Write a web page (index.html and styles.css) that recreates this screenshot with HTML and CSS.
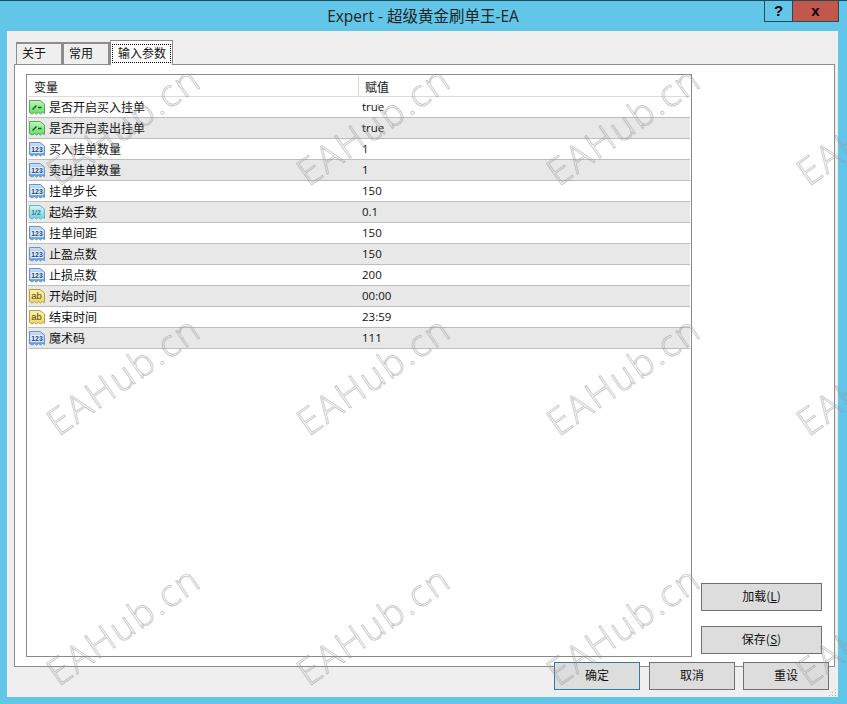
FILE: index.html
```html
<!DOCTYPE html>
<html lang="zh">
<head>
<meta charset="utf-8">
<title>Expert - 超级黄金刷单王-EA</title>
<link rel="stylesheet" href="styles.css">
</head>
<body>
<svg class="defs" width="0" height="0">
  <defs>
    <linearGradient id="gb" x1="0" y1="0" x2="0" y2="1"><stop offset="0" stop-color="#cfe3f8"/><stop offset="1" stop-color="#5f9cdc"/></linearGradient>
    <linearGradient id="gg" x1="0" y1="0" x2="0" y2="1"><stop offset="0" stop-color="#c4f5be"/><stop offset="1" stop-color="#5fdc66"/></linearGradient>
    <linearGradient id="gy" x1="0" y1="0" x2="0" y2="1"><stop offset="0" stop-color="#fbf1b8"/><stop offset="1" stop-color="#ecd668"/></linearGradient>
    <linearGradient id="gc" x1="0" y1="0" x2="0" y2="1"><stop offset="0" stop-color="#d8f4f6"/><stop offset="1" stop-color="#6fd0de"/></linearGradient>
    <symbol id="ic-bool" viewBox="0 0 16 16">
      <path d="M.5 1.500H11L15.500 5V14.500L13.500 13.500L11.500 15L9.500 13.500L7.500 15L5.500 13.500L3 15L.5 13.500Z" fill="url(#gg)" stroke="#58a858"/>
      <path d="M3.500 10.500L7.500 6.500M9 8.500H12.500" fill="none" stroke="#0c5c14" stroke-width="1.400"/>
    </symbol>
    <symbol id="ic-int" viewBox="0 0 16 16">
      <path d="M.5 1.500H11L15.500 5V14.500L13.500 13.500L11.500 15L9.500 13.500L7.500 15L5.500 13.500L3 15L.5 13.500Z" fill="url(#gb)" stroke="#6a94c4"/>
      <rect x="1.500" y="5" width="13" height="7" fill="#e6f0fb"/>
      <text x="8" y="11" class="ic-t ic-blue">123</text>
    </symbol>
    <symbol id="ic-dbl" viewBox="0 0 16 16">
      <path d="M.5 1.500H11L15.500 5V14.500L13.500 13.500L11.500 15L9.500 13.500L7.500 15L5.500 13.500L3 15L.5 13.500Z" fill="url(#gc)" stroke="#6ab4c4"/>
      <text x="7" y="10.500" class="ic-t ic-teal">1/2</text>
    </symbol>
    <symbol id="ic-str" viewBox="0 0 16 16">
      <path d="M.5 1.500H11L15.500 5V14.500L13.500 13.500L11.500 15L9.500 13.500L7.500 15L5.500 13.500L3 15L.5 13.500Z" fill="url(#gy)" stroke="#b8a040"/>
      <text x="7.500" y="11" class="ic-t ic-brown">ab</text>
    </symbol>
  </defs>
</svg>

<div class="window">
  <header class="titlebar">
    <div class="title">Expert - 超级黄金刷单王-EA</div>
    <div class="caption">
      <span class="cap cap-help">?</span>
      <span class="cap cap-close">x</span>
    </div>
  </header>

  <div class="dialog">
    <nav class="tabs">
      <span class="tab">关于</span>
      <span class="tab">常用</span>
      <span class="tab tab-active"><span class="focus">输入参数</span></span>
    </nav>

    <section class="pane">
      <div class="table">
        <div class="row head"><div class="c1">变量</div><div class="c2">赋值</div></div>
        <div class="row"><div class="c1"><svg class="ic"><use href="#ic-bool"/></svg>是否开启买入挂单</div><div class="c2">true</div></div>
        <div class="row alt"><div class="c1"><svg class="ic"><use href="#ic-bool"/></svg>是否开启卖出挂单</div><div class="c2">true</div></div>
        <div class="row"><div class="c1"><svg class="ic"><use href="#ic-int"/></svg>买入挂单数量</div><div class="c2">1</div></div>
        <div class="row alt"><div class="c1"><svg class="ic"><use href="#ic-int"/></svg>卖出挂单数量</div><div class="c2">1</div></div>
        <div class="row"><div class="c1"><svg class="ic"><use href="#ic-int"/></svg>挂单步长</div><div class="c2">150</div></div>
        <div class="row alt"><div class="c1"><svg class="ic"><use href="#ic-dbl"/></svg>起始手数</div><div class="c2">0.1</div></div>
        <div class="row"><div class="c1"><svg class="ic"><use href="#ic-int"/></svg>挂单间距</div><div class="c2">150</div></div>
        <div class="row alt"><div class="c1"><svg class="ic"><use href="#ic-int"/></svg>止盈点数</div><div class="c2">150</div></div>
        <div class="row"><div class="c1"><svg class="ic"><use href="#ic-int"/></svg>止损点数</div><div class="c2">200</div></div>
        <div class="row alt"><div class="c1"><svg class="ic"><use href="#ic-str"/></svg>开始时间</div><div class="c2">00:00</div></div>
        <div class="row"><div class="c1"><svg class="ic"><use href="#ic-str"/></svg>结束时间</div><div class="c2">23:59</div></div>
        <div class="row alt"><div class="c1"><svg class="ic"><use href="#ic-int"/></svg>魔术码</div><div class="c2">111</div></div>
      </div>
      <div class="side">
        <button class="btn btn-side">加载(<u>L</u>)</button>
        <button class="btn btn-side">保存(<u>S</u>)</button>
      </div>
    </section>

    <footer class="actions">
      <button class="btn btn-act btn-default">确定</button>
      <button class="btn btn-act">取消</button>
      <button class="btn btn-act">重设</button>
      <svg class="grip" width="9" height="9" viewBox="0 0 9 9"><path d="M7 1h1v1H7zM4 4h1v1H4zM7 4h1v1H7zM1 7h1v1H1zM4 7h1v1H4zM7 7h1v1H7z" fill="#b0b0b0"/></svg>
    </footer>
  </div>
</div>

<div class="watermarks">
  <span class="wm">EAHub.cn</span><span class="wm">EAHub.cn</span><span class="wm">EAHub.cn</span><span class="wm">EAHub.cn</span>
  <span class="wm">EAHub.cn</span><span class="wm">EAHub.cn</span><span class="wm">EAHub.cn</span><span class="wm">EAHub.cn</span>
  <span class="wm">EAHub.cn</span><span class="wm">EAHub.cn</span><span class="wm">EAHub.cn</span><span class="wm">EAHub.cn</span>
</div>
</body>
</html>
```
FILE: styles.css
```css
* { box-sizing: border-box; }
html, body { margin: 0; padding: 0; }
body {
  width: 847px;
  height: 704px;
  overflow: hidden;
  position: relative;
  background: #62c6e9;
  font-family: "Noto Sans CJK SC", sans-serif;
  font-size: 12px;
  color: #111;
}
.defs { position: absolute; }
.ic-t { font-family: "Liberation Sans", sans-serif; font-size: 6.8px; font-weight: 700; text-anchor: middle; }
.ic-blue { fill: #123f86; }
.ic-teal { fill: #1f7f90; }
.ic-brown { fill: #5c4a08; font-size: 9.5px; font-weight: 400; }

.window {
  height: 704px;
  border-top: 1px solid #1f4a5c;
  padding: 0 9px 7px 7px;
  display: flex;
  flex-direction: column;
}
.titlebar {
  height: 30px;
  flex: none;
  display: flex;
  justify-content: center;
  position: relative;
}
.title {
  font-family: "Open Sans", "Noto Sans CJK SC", sans-serif;
  font-size: 15.5px;
  line-height: 30px;
  color: #222;
  margin-left: 1px;
}
.caption {
  position: absolute;
  top: 0;
  right: -1px;
  display: flex;
  height: 21px;
  border: 1px solid #2a4a58;
  border-top: 0;
}
.cap {
  display: block;
  font-family: "Liberation Sans", sans-serif;
  font-weight: 700;
  font-size: 15px;
  line-height: 20px;
  text-align: center;
  color: #000;
}
.cap-help { width: 28px; border-right: 1px solid #2a4a58; }
.cap-close { width: 45px; background: #c4574c; }

.dialog {
  flex: 1;
  min-height: 0;
  background: #efefef;
  padding: 9px 3px 0 7px;
  display: flex;
  flex-direction: column;
}
.tabs {
  height: 24px;
  flex: none;
  display: flex;
  align-items: flex-end;
  padding-left: 2px;
  position: relative;
  z-index: 1;
}
.tab {
  width: 47px;
  height: 22px;
  border: 2px solid #8d8d8d;
  border-bottom: 0;
  border-left-width: 1px;
  background: #efefef;
  padding-left: 5px;
  line-height: 18px;
}
.tab-active {
  width: 63px;
  height: 25px;
  background: #fff;
  border: 1px solid #8d8d8d;
  border-bottom: 0;
  margin-bottom: -1px;
  padding: 3px 1px 0;
}
.focus {
  display: block;
  height: 19px;
  border: 1px dotted #000;
  padding: 0 0 0 5px;
  line-height: 15px;
}
.pane {
  height: 603px;
  flex: none;
  background: #fff;
  border: 1px solid #8d8d8d;
  padding: 9px 12px 9px 11px;
  display: flex;
  gap: 9px;
}
.table {
  width: 666px;
  border: 1px solid #8a8a8a;
  padding: 1px 1px 0 1px;
  background: #fff;
}
.row {
  display: flex;
  height: 21px;
  border-bottom: 1px solid #bdbdbd;
  line-height: 20px;
  background: #fff;
}
.row.alt { background: #e8e8e8; }
.head { border-bottom-color: #dcdcdc; line-height: 21px; }
.c1 {
  width: 331px;
  flex: none;
  display: flex;
  align-items: center;
  padding-left: 1px;
  white-space: nowrap;
}
.head .c1 { padding-left: 6px; border-right: 1px solid #d4d4d4; }
.head .c2 { padding-left: 6px; }
.c2 {
  flex: 1;
  padding-left: 3px;
  font-family: "Open Sans", "Noto Sans CJK SC", sans-serif;
  font-size: 11.5px;
}
.head .c2 { font-family: "Noto Sans CJK SC", sans-serif; font-size: 12px; }
.ic { width: 16px; height: 16px; margin-right: 4px; flex: none; }

.side {
  flex: 1;
  display: flex;
  flex-direction: column;
  justify-content: flex-end;
  gap: 15px;
  padding-bottom: 3px;
}
.btn {
  display: block;
  margin: 0;
  background: #dddddd;
  border: 1px solid #707070;
  font: inherit;
  color: #111;
  padding: 0 0 3px;
}
.btn-side { width: 121px; height: 28px; }
.actions {
  margin-top: -5px;
  display: flex;
  gap: 9px;
  padding-left: 540px;
  position: relative;
}
.btn-act { width: 86px; height: 28px; }
.btn-act + .btn-act + .btn-act { margin-left: -1px; }
.btn-default { border-color: #2f7ba6; }
.grip { position: absolute; right: -2px; bottom: -7px; }

.watermarks {
  position: absolute;
  inset: 0;
  overflow: hidden;
  pointer-events: none;
  display: grid;
  grid-template-columns: repeat(4, 250px);
  grid-auto-rows: 250px;
  padding: 152px 0 0 62px;
}
.wm {
  display: block;
  width: 200px;
  height: 40px;
  font-family: "Open Sans", sans-serif;
  font-weight: 300;
  font-size: 37px;
  letter-spacing: 2px;
  line-height: 40px;
  white-space: nowrap;
  color: transparent;
  -webkit-text-stroke: 0.8px rgba(150, 150, 150, 0.6);
  transform-origin: 0 100%;
  transform: rotate(-35deg);
}
```
